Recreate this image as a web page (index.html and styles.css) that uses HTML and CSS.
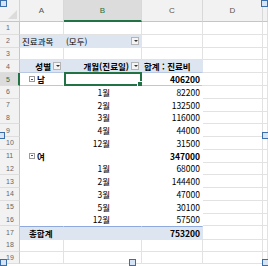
FILE: index.html
```html
<!DOCTYPE html>
<html lang="ko">
<head>
    <meta charset="UTF-8">
    <title>피벗 테이블</title>
    <link rel="stylesheet" href="styles.css">
</head>
<body>
    <div class="sheet">
        <div class="row head">
            <div class="corner"><span class="tri"></span></div>
            <div class="ch">A</div>
            <div class="ch sel">B</div>
            <div class="ch">C</div>
            <div class="ch">D</div>
            <div class="ch"></div>
        </div>

        <div class="row">
            <div class="rh">1</div>
            <div class="c"></div><div class="c"></div><div class="c"></div><div class="c"></div><div class="c"></div>
        </div>
        <div class="row">
            <div class="rh">2</div>
            <div class="c filter">진료과목</div>
            <div class="c filter">(모두)<span class="dd"></span></div>
            <div class="c"></div><div class="c"></div><div class="c"></div>
        </div>
        <div class="row">
            <div class="rh">3</div>
            <div class="c"></div><div class="c"></div><div class="c"></div><div class="c"></div><div class="c"></div>
        </div>
        <div class="row">
            <div class="rh">4</div>
            <div class="c pv ph right bold">성별<span class="dd"></span></div>
            <div class="c pv ph right bold">개월(진료일)<span class="dd"></span></div>
            <div class="c pv ph bold">합계 : 진료비</div>
            <div class="c"></div><div class="c"></div>
        </div>
        <div class="row">
            <div class="rh sel">5</div>
            <div class="c pv grp bold"><span class="fold"></span>남</div>
            <div class="c pv grp active"><span class="fill"></span></div>
            <div class="c pv grp num bold">406200</div>
            <div class="c"></div><div class="c"></div>
        </div>
        <div class="row">
            <div class="rh">6</div>
            <div class="c pv"></div><div class="c pv month">1월</div><div class="c pv num">82200</div>
            <div class="c"></div><div class="c"></div>
        </div>
        <div class="row">
            <div class="rh">7</div>
            <div class="c pv"></div><div class="c pv month">2월</div><div class="c pv num">132500</div>
            <div class="c"></div><div class="c"></div>
        </div>
        <div class="row">
            <div class="rh">8</div>
            <div class="c pv"></div><div class="c pv month">3월</div><div class="c pv num">116000</div>
            <div class="c"></div><div class="c"></div>
        </div>
        <div class="row">
            <div class="rh">9</div>
            <div class="c pv"></div><div class="c pv month">4월</div><div class="c pv num">44000</div>
            <div class="c"></div><div class="c"></div>
        </div>
        <div class="row">
            <div class="rh">10</div>
            <div class="c pv"></div><div class="c pv month">12월</div><div class="c pv num">31500</div>
            <div class="c"></div><div class="c"></div>
        </div>
        <div class="row">
            <div class="rh">11</div>
            <div class="c pv grp bold"><span class="fold"></span>여</div>
            <div class="c pv grp"></div>
            <div class="c pv grp num bold">347000</div>
            <div class="c"></div><div class="c"></div>
        </div>
        <div class="row">
            <div class="rh">12</div>
            <div class="c pv"></div><div class="c pv month">1월</div><div class="c pv num">68000</div>
            <div class="c"></div><div class="c"></div>
        </div>
        <div class="row">
            <div class="rh">13</div>
            <div class="c pv"></div><div class="c pv month">2월</div><div class="c pv num">144400</div>
            <div class="c"></div><div class="c"></div>
        </div>
        <div class="row">
            <div class="rh">14</div>
            <div class="c pv"></div><div class="c pv month">3월</div><div class="c pv num">47000</div>
            <div class="c"></div><div class="c"></div>
        </div>
        <div class="row">
            <div class="rh">15</div>
            <div class="c pv"></div><div class="c pv month">5월</div><div class="c pv num">30100</div>
            <div class="c"></div><div class="c"></div>
        </div>
        <div class="row">
            <div class="rh">16</div>
            <div class="c pv"></div><div class="c pv month">12월</div><div class="c pv num">57500</div>
            <div class="c"></div><div class="c"></div>
        </div>
        <div class="row">
            <div class="rh">17</div>
            <div class="c pv total bold indent">총합계</div>
            <div class="c pv total"></div>
            <div class="c pv total num bold">753200</div>
            <div class="c"></div><div class="c"></div>
        </div>
        <div class="row">
            <div class="rh">18</div>
            <div class="c"></div><div class="c"></div><div class="c"></div><div class="c"></div><div class="c"></div>
        </div>
        <div class="row">
            <div class="rh">19</div>
            <div class="c"></div><div class="c"></div><div class="c"></div><div class="c"></div><div class="c"></div>
        </div>

        <!-- resize handles of the picture frame -->
        <span class="handle h-tl"></span>
        <span class="handle h-tr"></span>
        <span class="handle h-ml"></span>
        <span class="handle h-mr"></span>
        <span class="handle h-bl"></span>
        <span class="handle h-bm"></span>
        <span class="handle h-br"></span>
    </div>
</body>
</html>
```

FILE: styles.css
```css
body {
    margin: 0;
    background: #fff;
}
.sheet {
    position: relative;
    width: 268px;
    height: 266px;
    overflow: hidden;
    font-family: "Noto Sans CJK KR", "Noto Sans", sans-serif;
    font-size: 8.5px;
    color: #000;
}
.row {
    display: grid;
    grid-template-columns: 20px 44px 78px 61px 60px 5px;
    height: 12.75px;
}
.row.head {
    height: 22px;
}
.corner {
    position: relative;
    background: #f2f2f2;
    border-right: 1px solid #d4d4d4;
    border-bottom: 1px solid #c6c6c6;
}
.tri {
    position: absolute;
    right: 2px;
    bottom: 2px;
    border-left: 9px solid transparent;
    border-bottom: 9px solid #dcdcdc;
}
.ch {
    box-sizing: border-box;
    background: #f2f2f2;
    border-right: 1px solid #d8d8d8;
    border-bottom: 1px solid #c6c6c6;
    color: #555;
    font-family: "Liberation Sans", sans-serif;
    font-size: 8px;
    display: flex;
    align-items: center;
    justify-content: center;
}
.ch.sel {
    background: #dcdcdc;
    border-bottom: 2px solid #217346;
    color: #217346;
}
.rh {
    box-sizing: border-box;
    background: #f2f2f2;
    border-right: 1px solid #c6c6c6;
    border-bottom: 1px solid #dedede;
    color: #666;
    font-family: "Liberation Sans", sans-serif;
    font-size: 7px;
    display: flex;
    align-items: center;
    padding-left: 6px;
}
.rh.sel {
    background: #dcdcdc;
    border-right: 2px solid #217346;
    color: #217346;
}
.c {
    position: relative;
    box-sizing: border-box;
    border-right: 1px solid #e2e2e2;
    border-bottom: 1px solid #e2e2e2;
    display: flex;
    align-items: center;
    padding: 0 2px;
    white-space: nowrap;
    overflow: visible;
}
.pv {
    border-color: transparent;
    background: #fff;
}
.filter {
    background: #dde5f1;
    border-color: #dde5f1;
}
.ph {
    background: #dde5f1;
    border-bottom: 1px solid #b8c8e2;
}
.grp {
    border-bottom: 1px solid #b8c8e2;
}
.total {
    background: #dde5f1;
    border-top: 1px solid #8ea9db;
    border-bottom-color: #dde5f1;
}
.right {
    justify-content: flex-end;
    padding-right: 12px;
}
.bold {
    font-weight: bold;
}
.num {
    justify-content: flex-end;
}
.month {
    justify-content: flex-end;
    padding-right: 31px;
}
.indent {
    padding-left: 9px;
}
.dd {
    position: absolute;
    right: 2px;
    top: 2px;
    box-sizing: border-box;
    width: 8px;
    height: 8px;
    background: #f4f4f4;
    border: 1px solid #b4b4b4;
}
.dd::after {
    content: "";
    position: absolute;
    left: 1.5px;
    top: 2px;
    border-left: 2px solid transparent;
    border-right: 2px solid transparent;
    border-top: 2px solid #333;
}
.fold {
    position: relative;
    box-sizing: border-box;
    width: 6px;
    height: 6px;
    margin: 0 2px 0 7px;
    border: 1px solid #9a9a9a;
}
.fold::after {
    content: "";
    position: absolute;
    left: 1px;
    right: 1px;
    top: 1.5px;
    height: 1px;
    background: #555;
}
.active {
    border: 2px solid #217346;
    margin-top: -1px;
}
.fill {
    position: absolute;
    right: -3px;
    bottom: -3px;
    width: 4px;
    height: 4px;
    background: #217346;
    border: 1px solid #fff;
}
.handle {
    position: absolute;
    box-sizing: border-box;
    width: 7px;
    height: 7px;
    background: #d6e4f5;
    border: 1px solid #3b6ea8;
}
.h-tl { left: 0; top: 0; }
.h-tr { left: 261px; top: 0; }
.h-ml { left: -2px; top: 132px; }
.h-mr { left: 262px; top: 132px; }
.h-bl { left: 0; top: 259px; }
.h-bm { left: 129px; top: 259px; }
.h-br { left: 262px; top: 259px; }
```
